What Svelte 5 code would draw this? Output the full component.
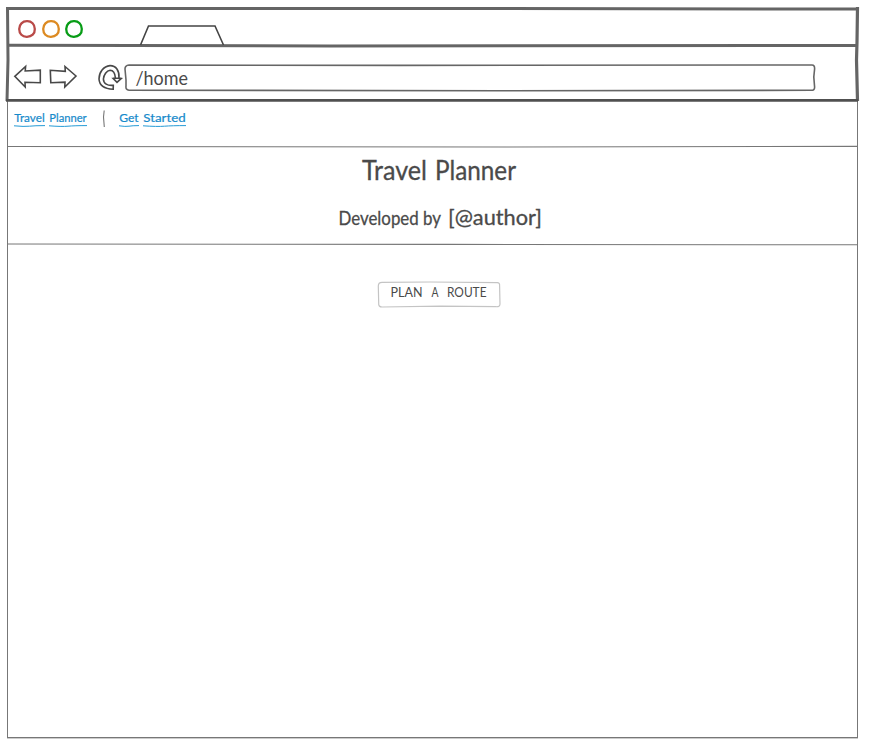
<script>
  const lights = ['#b94a48', '#dc8a22', '#079c16'];
  const links = [
    { width: 73, words: [{ text: 'Travel', x: 0, w: 31 }, { text: 'Planner', x: 35, w: 38 }] },
    { width: 67, words: [{ text: 'Get', x: 0, w: 20 }, { text: 'Started', x: 24, w: 43 }] }
  ];
</script>

<div class="page">
  <div class="browser">
    <header>
      <svg class="frame" width="869" height="105" viewBox="0 0 869 105" aria-hidden="true">
        <g fill="none" stroke="#656565">
          <path d="M7 8.5 H400 L858 9" stroke-width="3" />
          <path d="M7.5 7 L8 60 L7 101" stroke-width="3" />
          <path d="M857.5 7 L857 42 L856.5 60 L857.5 101" stroke-width="3.2" />
          <path d="M8 45.3 L330 46 L858 45.5" stroke-width="3" />
          <path d="M6 100.3 L858 100.4" stroke="#505050" stroke-width="2.8" />
          <path d="M140.5 45 L148.5 26 L215 26 L223.5 45" stroke="#444" stroke-width="1.6" />
        </g>
      </svg>
      <div class="titlebar">
        {#each lights as color}
          <svg width="18" height="18" viewBox="0 0 18 18">
            <path d="M9 1.2 C13.5 1 16.8 4.3 16.8 9 C17 13.7 13.7 16.8 9 16.8 C4.3 17 1.2 13.6 1.2 9 C1.2 4.4 4.6 1.1 9 1.2Z" fill="none" stroke={color} stroke-width="2.3" />
          </svg>
        {/each}
      </div>
      <div class="toolbar">
        <svg class="back" width="28" height="24" viewBox="14 65 28 24">
          <path d="M14.8 76.3 L25.6 66.5 L25.2 71 L40.3 70.2 L40.3 82.7 L25 82.3 L25.2 87Z" />
        </svg>
        <svg class="forward" width="28" height="24" viewBox="49 65 28 24">
          <path d="M76 76 L65 66.5 L65.3 71.3 L50.3 70.3 L50.8 82.7 L65 82.2 L64.8 87Z" />
        </svg>
        <svg class="reload" width="26" height="28" viewBox="97 63 26 28">
          <path d="M113.3 85.3 L113.2 89.2 C106 88.9 99.4 86 99 79 C99 72 103.5 66.2 110 65.6 C116 65.5 119.5 70.5 119 78 L121.3 78.4 L117 82.4 L113 78.3 L115.4 78 C115 73 113.2 70.4 110.1 70.3 C106.5 70.5 103.8 75 103.4 79 C103.4 83.5 107.5 86 113.3 85.3Z M113 78.3 L121.3 78.3" />
        </svg>
        <div class="address">
          <svg width="692" height="28" viewBox="124 64 692 28">
            <path d="M129 65 L400 65.4 L812 65 Q814.8 65 814.6 69 L813.8 77 L814.6 87 Q814.8 90.5 811 90.3 L500 90.7 L129 90.2 Q125.5 90 126 86 L126 80 L125 69 Q125 65.3 129 65Z" fill="none" stroke="#666" stroke-width="1.6" />
            <text x="135.5" y="84.8" font-size="19.5" textLength="52.5" lengthAdjust="spacingAndGlyphs">/home</text>
          </svg>
        </div>
      </div>
    </header>

    <nav>
      {#each links as link, i}
        {#if i > 0}
          <svg class="divider" width="4" height="18" viewBox="0 0 4 18"><path d="M2.2 .5 L1.5 7 L2.3 17" fill="none" stroke="#777" stroke-width="1.1" /></svg>
        {/if}
        <a href="#top" aria-label={link.words.map((w) => w.text).join(' ')}>
          <svg width={link.width} height="18" viewBox="0 0 {link.width} 18">
            {#each link.words as word}
              <text x={word.x + 0.3} y="12" font-size="11.5" textLength={word.w - 0.6} lengthAdjust="spacingAndGlyphs">{word.text}</text>
              <path d="M{word.x} 15.8 q{word.w / 3} 1 {word.w / 2} .4 t{word.w / 2} -.6" />
            {/each}
          </svg>
        </a>
      {/each}
    </nav>

    <section class="hero">
      <svg class="rule" width="851" height="3" viewBox="0 0 851 3"><path d="M0 1.5 L500 2 L851 1.4" /></svg>
      <h1>
        <svg width="154" height="34" viewBox="0 0 154 34">
          <text x="0" y="27" font-size="26" textLength="65" lengthAdjust="spacingAndGlyphs">Travel</text>
          <text x="73" y="27" font-size="26" textLength="81" lengthAdjust="spacingAndGlyphs">Planner</text>
        </svg>
      </h1>
      <h2>
        <svg width="206" height="32" viewBox="0 0 206 32">
          <text x="0.5" y="22" font-size="20" textLength="102.5" lengthAdjust="spacingAndGlyphs">Developed by</text>
          <text x="110" y="22" font-size="20.5" textLength="94" lengthAdjust="spacingAndGlyphs">[@author]</text>
        </svg>
      </h2>
      <svg class="rule bottom" width="851" height="3" viewBox="0 0 851 3"><path d="M0 1 L440 1.4 L851 1.8" /></svg>
    </section>

    <main>
      <button aria-label="Plan a route">
        <svg width="124" height="28" viewBox="377 281 124 28">
          <path d="M382 282.4 L430 282 L497 282.6 Q500 282.4 499.6 286 L500 304 Q500 307 496 306.7 L440 306.2 L382 307 Q378.3 307 378.7 303 L378.3 286 Q378.3 282.5 382 282.4Z" fill="#fff" stroke="#c4c4c4" stroke-width="1.2" />
          <text x="390.5" y="297.4" font-size="12.5" textLength="32" lengthAdjust="spacingAndGlyphs">PLAN</text>
          <text x="431.5" y="297.4" font-size="12.5" textLength="7" lengthAdjust="spacingAndGlyphs">A</text>
          <text x="447" y="297.4" font-size="12.5" textLength="39.5" lengthAdjust="spacingAndGlyphs">ROUTE</text>
        </svg>
      </button>
    </main>
  </div>
</div>

<style>
  :global(body) { background: #fff; }
  .page {
    box-sizing: border-box;
    width: 869px;
    height: 744px;
    padding: 0 11px 6px 7px;
    overflow: hidden;
    font-family: Lato, "Open Sans", sans-serif;
    color: #4a4a4a;
  }
  .browser {
    box-sizing: border-box;
    height: 100%;
    display: flex;
    flex-direction: column;
  }
  svg { display: block; overflow: visible; flex: none; }
  text { fill: #4a4a4a; }
  header { position: relative; height: 101px; flex: none; }
  .frame { position: absolute; left: -7px; top: 0; pointer-events: none; }
  .titlebar {
    box-sizing: border-box;
    height: 46px;
    display: flex;
    gap: 5.3px;
    padding: 20px 0 0 11.3px;
  }
  .toolbar {
    box-sizing: border-box;
    height: 55px;
    display: flex;
    align-items: flex-start;
    padding: 19px 0 0 7px;
  }
  .toolbar > svg { fill: none; stroke: #484848; stroke-width: 1.6; }
  .forward { margin-left: 7px; }
  .reload { margin: -2px 1px 0 20px; }
  .address { margin-top: -1px; }
  nav, .hero, main {
    box-sizing: border-box;
    border-left: 1px solid #777;
    border-right: 1px solid #777;
  }
  nav { height: 45px; flex: none; display: flex; padding: 9px 0 0 6px; }
  nav a { text-decoration: none; }
  nav text { fill: #168acb; stroke: #168acb; stroke-width: .2; }
  nav a path { fill: none; stroke: #259bd6; stroke-width: 1; }
  .divider { margin: 0 13px 0 15px; }
  .hero {
    height: 99px;
    flex: none;
    display: flex;
    flex-direction: column;
    align-items: center;
  }
  .rule { margin-top: -1px; }
  .rule path { fill: none; stroke: #777; stroke-width: 1.1; }
  h1, h2 { margin: 0; font-weight: 400; }
  h1 { height: 34px; margin: 5px 0 0 13px; }
  h2 { height: 32px; margin: 16px 0 0 17px; }
  h1 text, h2 text { stroke: #4a4a4a; stroke-width: .3; }
  .bottom { margin-top: 8px; }
  main {
    flex: 1;
    border-bottom: 1px solid #777;
    box-shadow: 0 1px #ccc;
    display: flex;
    justify-content: center;
    align-items: flex-start;
    padding: 36px 0 0 13px;
  }
  button { display: block; padding: 0; border: 0; background: none; font: inherit; }
</style>
